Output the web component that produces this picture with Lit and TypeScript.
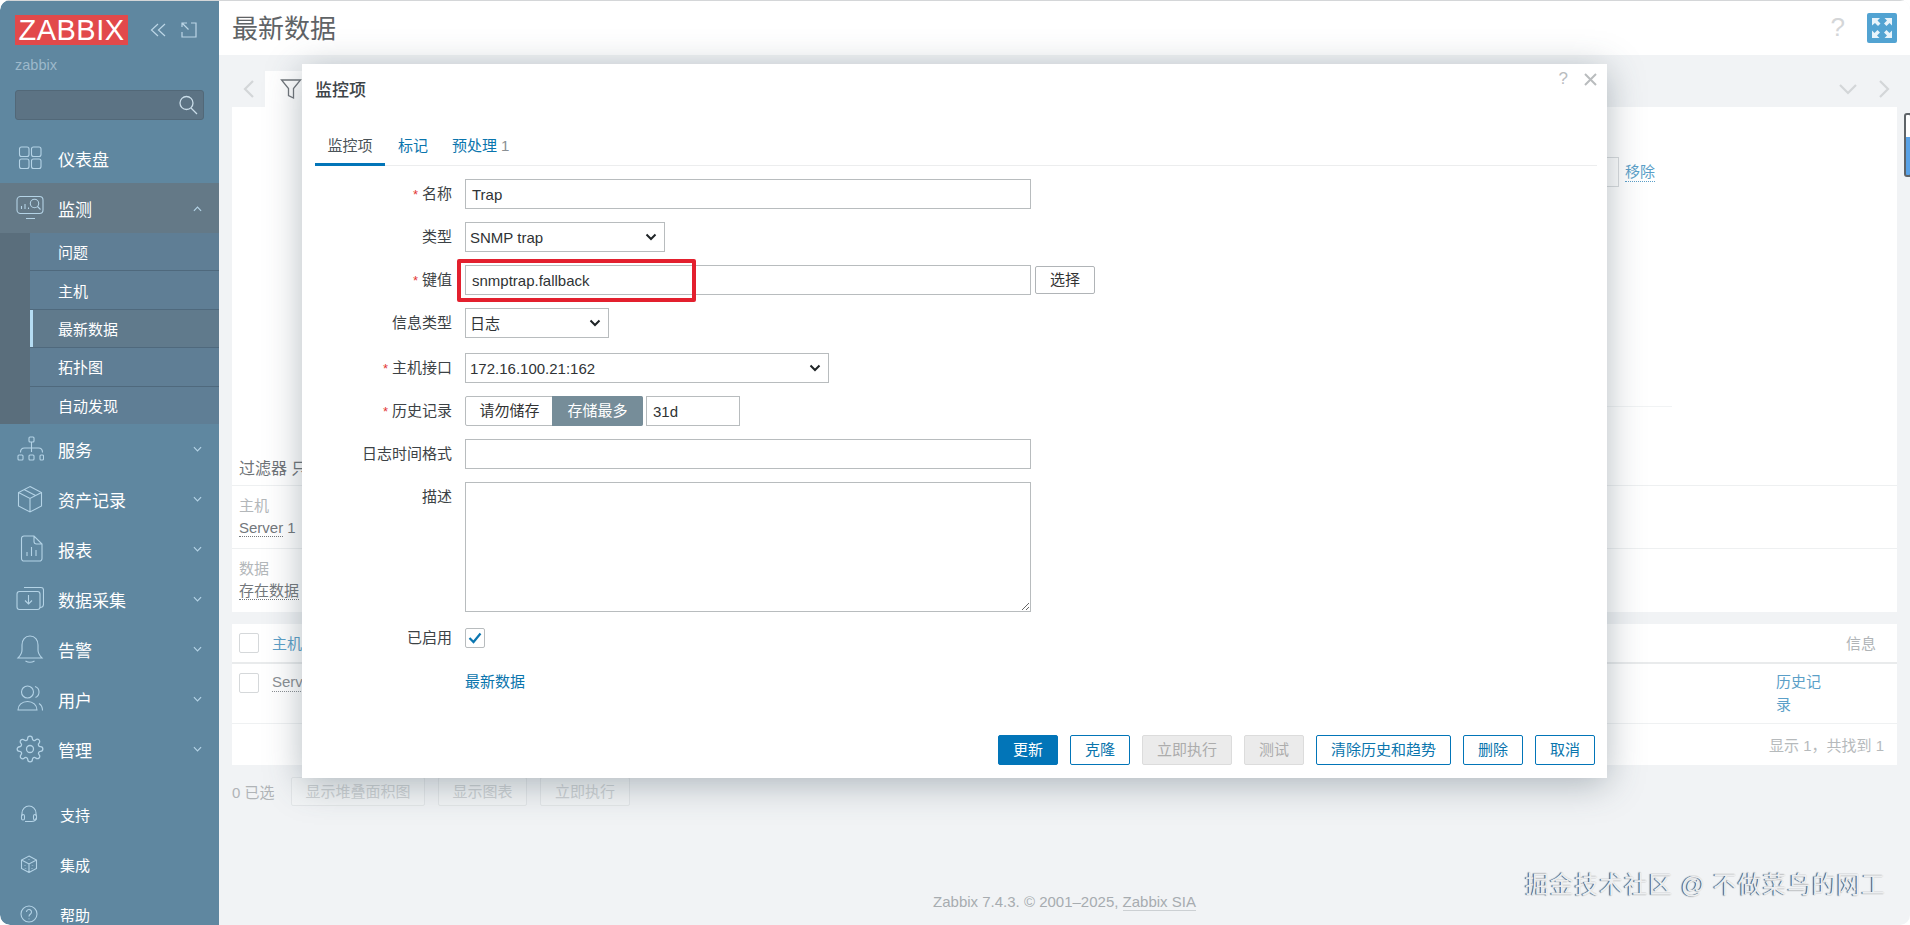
import { LitElement, html, css, svg } from "lit";
import { customElement } from "lit/decorators.js";

const gear = svg`<svg viewBox="0 0 24 24"><circle cx="12" cy="12" r="3"/><path d="M19.4 15a1.65 1.65 0 0 0 .33 1.82l.06.06a2 2 0 0 1 0 2.83 2 2 0 0 1-2.83 0l-.06-.06a1.65 1.65 0 0 0-1.82-.33 1.65 1.65 0 0 0-1 1.51V21a2 2 0 0 1-2 2 2 2 0 0 1-2-2v-.09A1.65 1.65 0 0 0 9 19.4a1.65 1.65 0 0 0-1.82.33l-.06.06a2 2 0 0 1-2.83 0 2 2 0 0 1 0-2.83l.06-.06a1.65 1.65 0 0 0 .33-1.82 1.65 1.65 0 0 0-1.51-1H3a2 2 0 0 1-2-2 2 2 0 0 1 2-2h.09A1.65 1.65 0 0 0 4.6 9a1.65 1.65 0 0 0-.33-1.82l-.06-.06a2 2 0 0 1 0-2.83 2 2 0 0 1 2.83 0l.06.06a1.65 1.65 0 0 0 1.82.33H9a1.65 1.65 0 0 0 1-1.51V3a2 2 0 0 1 2-2 2 2 0 0 1 2 2v.09a1.65 1.65 0 0 0 1 1.51 1.65 1.65 0 0 0 1.82-.33l.06-.06a2 2 0 0 1 2.83 0 2 2 0 0 1 0 2.83l-.06.06a1.65 1.65 0 0 0-.33 1.82V9a1.65 1.65 0 0 0 1.51 1H21a2 2 0 0 1 2 2 2 2 0 0 1-2 2h-.09a1.65 1.65 0 0 0-1.51 1z"/></svg>`;

const icons: Record<string, unknown> = {
  dash: svg`<svg viewBox="0 0 28 28"><rect x="3.5" y="3" width="9.5" height="9.5" rx="2"/><rect x="15.5" y="3" width="9.5" height="9.5" rx="2"/><rect x="3.5" y="15" width="9.5" height="9.5" rx="2"/><rect x="15.5" y="15" width="9.5" height="9.5" rx="2"/></svg>`,
  mon: svg`<svg viewBox="0 0 28 28"><rect x="1" y="2.5" width="26" height="17" rx="3.5"/><path d="M5.5 15v-3M9 15v-5M12.5 15v-1.500M10 24.500h9"/><circle cx="18.500" cy="9.500" r="4.200"/><path d="M21.500 12.500l3 3"/></svg>`,
  svc: svg`<svg viewBox="0 0 28 28"><rect x="13" y="2" width="5" height="5" rx="1"/><rect x="2" y="20" width="5" height="5" rx="1"/><rect x="13" y="20" width="5" height="5" rx="1"/><rect x="24" y="20" width="3.500" height="5" rx="1"/><path d="M15.500 7v10M4.500 17.500c0-3 2-4.500 4-4.500h14c2 0 4 1.500 4 4.500"/></svg>`,
  inv: svg`<svg viewBox="0 0 28 28"><path d="M14 1.500l11.500 6v13.500l-11.500 6-11.500-6v-13.500zM2.500 7.500l11.500 6 11.500-6M14 13.500v13.500M8 4.500l11.500 6"/></svg>`,
  rep: svg`<svg viewBox="0 0 28 28"><path d="M8 1h10l8 8v14.500a2.500 2.500 0 0 1-2.500 2.500h-15.500a2.500 2.500 0 0 1-2.500-2.500v-20a2.500 2.500 0 0 1 2.500-2.500zM18 1v5.500a2.500 2.500 0 0 0 2.500 2.500h5.500M11 21v-4M15.500 21v-9M20 21v-6"/></svg>`,
  data: svg`<svg viewBox="0 0 28 28"><rect x="1" y="6.500" width="23" height="18" rx="2.500"/><path d="M8 2.500h17a2.500 2.500 0 0 1 2.500 2.500v14c0 2-1 3.500-3.500 3.500M12.500 10v9M9 15.500l3.500 3.500 3.500-3.500"/></svg>`,
  bell: svg`<svg viewBox="0 0 28 28"><path d="M14 1c-5 0-8 4-8 9v5c0 3.500-1.500 5.500-4 8h24c-2.500-2.500-4-4.500-4-8v-5c0-5-3-9-8-9zM9.500 26q4.500 2.500 9 0"/></svg>`,
  user: svg`<svg viewBox="0 0 28 28"><circle cx="11.500" cy="7" r="6"/><path d="M2 25c0-5 4-8.500 9.500-8.500s9.500 3.500 9.500 8.500zM19 1.500c3 1 4 3.500 4 5.500s-1 4.500-3.500 5.500M26.500 25.500c0-3-1-5.500-3.500-7"/></svg>`,
  gear,
  sup: svg`<svg viewBox="0 0 18 18"><path d="M2 11V8a7 7 0 0 1 14 0v3M5 16.500h6.500c2.500 0 4.500-1 4.500-3.500"/><rect x="1.500" y="9.500" width="3" height="5.500" rx="1.500"/><rect x="13.500" y="9.500" width="3" height="5.500" rx="1.500"/></svg>`,
  int: svg`<svg viewBox="0 0 18 18"><path d="M9 1l7.500 4v8.500L9 17.500l-7.500-4V5zM1.500 5L9 9l7.500-4M9 9v8.500"/><path d="M9 4.500v.5M5 10v.5M12.500 10v.5M5.500 13v.5M12 13v.5" stroke-width="1.600"/></svg>`,
  help: svg`<svg viewBox="0 0 18 18"><circle cx="9" cy="9" r="8"/><path d="M6.500 7a2.500 2.500 0 1 1 4 2c-1 .7-1.500 1.200-1.500 2.500M9 13.500v.8"/></svg>`,
};

const chevron = (up = false) => svg`<svg class="chev" viewBox="0 0 10 6"><path d=${up ? "M1 5l4-4 4 4" : "M1 1l4 4 4-4"}/></svg>`;
const selArrow = svg`<svg class="arrow" viewBox="0 0 12 8"><path d="M1.500 1.500L6 6l4.500-4.500"/></svg>`;

const topNav = [
  { label: "服务", icon: "svc" }, { label: "资产记录", icon: "inv" }, { label: "报表", icon: "rep" },
  { label: "数据采集", icon: "data" }, { label: "告警", icon: "bell" }, { label: "用户", icon: "user" }, { label: "管理", icon: "gear" },
];
const subNav = ["问题", "主机", "最新数据", "拓扑图", "自动发现"];
const bottomNav = [{ label: "支持", icon: "sup" }, { label: "集成", icon: "int" }, { label: "帮助", icon: "help" }];

@customElement("app-sidebar")
class AppSidebar extends LitElement {
  static styles = css`
    :host { display: block; width: 219px; height: 925px; flex: none; background: #5f87a0; color: #fff; overflow: hidden; border-radius: 10px 0 0 10px; font-family: "Liberation Sans", "Noto Sans CJK SC", sans-serif; }
    .brand { display: flex; align-items: center; padding: 15px 0 0 15px; height: 30px; }
    .logo { width: 113px; height: 30px; background: #e2494b; font-size: 29px; line-height: 31px; text-align: center; letter-spacing: .5px; }
    .ctl { margin-left: 22px; width: 16px; height: 16px; fill: none; stroke: #bcd6e6; stroke-width: 1.2; }
    .ctl + .ctl { margin-left: 15px; }
    .user { padding: 10px 0 0 15px; font-size: 14.5px; line-height: 20px; color: #9db9cb; }
    .search { margin: 15px 0 13px 15px; width: 189px; height: 30px; box-sizing: border-box; background: #5c7384; border: 1px solid #526878; border-radius: 3px; display: flex; justify-content: flex-end; align-items: center; padding-right: 5px; }
    .search svg { width: 20px; height: 20px; fill: none; stroke: #c9dce8; stroke-width: 1.3; }
    .item { height: 50px; display: flex; align-items: center; font-size: 17px; position: relative; }
    .icon { width: 28px; height: 28px; margin: 0 14px 0 16px; flex: none; }
    .icon svg { display: block; width: 100%; height: 100%; fill: none; stroke: #b4d3e6; stroke-width: 1.1; }
    .chev { position: absolute; left: 193px; top: 22px; width: 9px; height: 6px; fill: none; stroke: #b4d3e6; stroke-width: 1.3; }
    .open { background: #647987; }
    .open svg.chev { top: 23px; }
    .subs { height: 191px; margin-left: 0; border-left: 30px solid #5a6e7c; background: #5f7e95; display: flex; flex-direction: column; }
    .sub { flex: 1; display: flex; align-items: center; padding-left: 28px; font-size: 15px; border-bottom: 1px solid #4f697d; box-sizing: border-box; }
    .sub:last-child { border-bottom: 0; }
    .sub.active { background: #607a8c; box-shadow: inset 3px 0 0 #b5dcf2; }
    .bottom { margin-top: 15px; }
    .bottom .item { font-size: 15px; }
    .bottom .icon { width: 18px; height: 18px; margin: 0 22px 0 20px; }
  `;
  render() {
    return html`
      <div class="brand">
        <div class="logo">ZABBIX</div>
        <svg class="ctl" viewBox="0 0 16 16"><path d="M8 2L1.500 8 8 14M15 2L8.500 8l6.500 6"/></svg>
        <svg class="ctl" viewBox="0 0 16 16"><path d="M1 5V1h5M1 1l6.500 6.500M10 1h5v14H1v-5"/></svg>
      </div>
      <div class="user">zabbix</div>
      <div class="search"><svg viewBox="0 0 20 20"><circle cx="8.500" cy="8" r="6.500"/><path d="M13 13l6 6"/></svg></div>
      <div class="item"><span class="icon">${icons.dash}</span>仪表盘</div>
      <div class="item open"><span class="icon">${icons.mon}</span>监测${chevron(true)}</div>
      <div class="subs">
        ${subNav.map((s) => html`<div class="sub ${s === "最新数据" ? "active" : ""}">${s}</div>`)}
      </div>
      ${topNav.map((n) => html`<div class="item"><span class="icon">${icons[n.icon]}</span>${n.label}${chevron()}</div>`)}
      <div class="bottom">
        ${bottomNav.map((n) => html`<div class="item"><span class="icon">${icons[n.icon]}</span>${n.label}</div>`)}
      </div>
    `;
  }
}

@customElement("app-page")
class AppPage extends LitElement {
  static styles = css`
    :host { display: flex; flex-direction: column; flex: 1; min-width: 0; height: 925px; background: #f1f3f5; font-family: "Liberation Sans", "Noto Sans CJK SC", sans-serif; font-size: 15px; color: #8a8f93; }
    .head { height: 55px; flex: none; background: #fff; display: flex; align-items: center; padding: 0 13px; }
    .head h1 { margin: 0; font-size: 26px; font-weight: 400; color: #5f6366; flex: 1; line-height: 55px; position: relative; top: 2px; }
    .q { font-size: 26px; color: #d4d6d8; margin-right: 22px; }
    .full { width: 30px; height: 30px; margin-top: 1px; background: #52a3d2; border-radius: 2px; display: flex; align-items: center; justify-content: center; }
    .full svg { width: 24px; height: 24px; fill: #e8f4fb; }
    .tabs { height: 52px; flex: none; display: flex; margin: 0 13px; align-items: flex-end; }
    .tabs .left { width: 33px; height: 36px; display: flex; align-items: center; justify-content: center; }
    .nav { fill: none; stroke: #d3d6d8; stroke-width: 2.200; }
    .ftab { width: 37px; height: 36px; background: #fff; display: flex; align-items: center; justify-content: center; box-sizing: border-box; padding-left: 14px; }
    .ftab svg { width: 22px; height: 22px; fill: none; stroke: #70757a; stroke-width: 1.3; }
    .tabs .right { margin-left: auto; display: flex; align-items: center; height: 36px; gap: 21px; padding-right: 7px; }
    .panel { height: 505px; flex: none; margin: 0 13px; background: #fff; display: flex; flex-direction: column; }
    .ptop { height: 379px; flex: none; border-bottom: 1px solid #eef0f1; box-sizing: border-box; padding-top: 50px; position: relative; }
    .rm { display: flex; align-items: center; padding-left: 1300px; height: 30px; }
    .rm i { display: block; width: 87px; height: 30px; border: 1px solid #d9dcde; box-sizing: border-box; margin-right: 6px; }
    .dotted { border-bottom: 1px dotted currentColor; line-height: 18px; }
    .rm a { color: #5b9fc8; }
    .hr { margin: 219px 225px 0 1300px; border-top: 1px solid #f1f3f4; }
    .ftitle { margin: 0; padding: 51px 0 0 7px; line-height: 22px; color: #6f7478; font-size: 16px; }
    .pr { height: 63px; flex: none; padding: 10px 7px 0; box-sizing: border-box; border-bottom: 1px solid #eef0f1; }
    .pr:last-child { border: 0; }
    .pr .k { color: #b3b7ba; line-height: 20px; }
    .pr .v { color: #73787c; line-height: 20px; margin-top: 2px; }
    .table { margin: 12px 13px 0; height: 141px; flex: none; background: #fff; display: flex; flex-direction: column; }
    .tr { display: flex; padding: 0 7px; box-sizing: border-box; }
    .th { align-items: center; border-bottom: 2px solid #e9ebec; height: 40px; }
    .td { height: 60px; padding-top: 9px; border-bottom: 1px solid #eff1f2; }
    .cb { width: 20px; height: 20px; box-sizing: border-box; border: 1px solid #d5d8da; border-radius: 2px; flex: none; margin-right: 13px; }
    .th a { color: #5b9fc8; margin-top: -2px; }
    .info { margin-left: auto; padding-right: 14px; color: #b0b4b7; margin-top: -2px; }
    .hist { margin-left: auto; width: 46px; margin-right: 68px; margin-top: -3px; color: #5b9fc8; line-height: 23px; word-break: break-all; }
    .tf { flex: 1; justify-content: flex-end; align-items: center; padding-right: 13px; color: #b6babc; }
    .acts { display: flex; align-items: center; margin: 12px 13px 0; height: 29px; flex: none; gap: 13px; color: #b0b4b7; }
    .acts .cnt { width: 46px; }
    .acts b { font-weight: 400; height: 29px; line-height: 27px; box-sizing: border-box; border: 1px solid #e3e6e8; border-radius: 2px; text-align: center; color: #cdd1d3; background: #f3f5f6; }
    .foot { margin-top: auto; padding-bottom: 14px; text-align: center; color: #a7acb0; font-size: 15px; line-height: 18px; }
    .foot span { border-bottom: 1px solid #ccd0d3; }
  `;
  render() {
    return html`
      <div class="head">
        <h1>最新数据</h1>
        <span class="q">?</span>
        <div class="full"><svg viewBox="0 0 24 24"><path d="M2 2h8l-2.500 2.500 3 3-2.500 2.500-3-3L2 9.500zM22 2v7.500L19.500 7l-3 3-2.500-2.500 3-3L14.500 2zM2 22v-7.500L4.500 17l3-3 2.500 2.500-3 3L9.500 22zM22 22h-7.500l2.500-2.500-3-3 2.500-2.500 3 3 2.500-2.500z"/></svg></div>
      </div>
      <div class="tabs">
        <div class="left"><svg class="nav" width="12" height="20" viewBox="0 0 12 20"><path d="M10 2L2 10l8 8"/></svg></div>
        <div class="ftab"><svg viewBox="0 0 22 22"><path d="M1.500 2h19l-7 8.500V20l-5-2.500v-7z"/></svg></div>
        <div class="right">
          <svg class="nav" width="18" height="12" viewBox="0 0 18 12"><path d="M1 2l8 8 8-8"/></svg>
          <svg class="nav" width="12" height="20" viewBox="0 0 12 20"><path d="M2 2l8 8-8 8"/></svg>
        </div>
      </div>
      <div class="panel">
        <div class="ptop">
          <div class="rm"><i></i><a class="dotted">移除</a></div>
          <div class="hr"></div>
          <div class="ftitle">过滤器 只</div>
        </div>
        <div class="pr"><div class="k">主机</div><div class="v"><span class="dotted">Server</span> 1</div></div>
        <div class="pr"><div class="k">数据</div><div class="v"><span class="dotted">存在数据</span></div></div>
      </div>
      <div class="table">
        <div class="tr th"><span class="cb"></span><a>主机</a><span class="info">信息</span></div>
        <div class="tr td"><span class="cb"></span><span class="dotted" style="height:18px">Server 1</span><span class="hist">历史记录</span></div>
        <div class="tr tf">显示 1，共找到 1</div>
      </div>
      <div class="acts">
        <span class="cnt">0 已选</span>
        <b style="width:134px">显示堆叠面积图</b><b style="width:89px">显示图表</b><b style="width:90px">立即执行</b>
      </div>
      <div class="foot">Zabbix 7.4.3. © 2001–2025, <span>Zabbix SIA</span></div>
    `;
  }
}

@customElement("item-dialog")
class ItemDialog extends LitElement {
  static styles = css`
    :host { position: absolute; left: 302px; top: 64px; width: 1305px; height: 714px; background: #fff; box-shadow: 0 6px 34px rgba(60, 80, 92, .38); box-sizing: border-box; padding: 0 10px 0 13px; display: flex; flex-direction: column; font-family: "Liberation Sans", "Noto Sans CJK SC", sans-serif; font-size: 15px; color: #333; }
    .top { height: 50px; flex: none; display: flex; align-items: center; justify-content: space-between; }
    .top h2 { margin: 0; font-size: 17px; font-weight: 500; color: #3d4448; position: relative; top: -1px; }
    .tools { display: flex; align-items: center; gap: 16px; position: relative; top: -10px; }
    .tools span { color: #b9bcbe; font-size: 17px; }
    .tools svg { width: 13px; height: 13px; stroke: #b9bcbe; stroke-width: 2; fill: none; }
    .tabs { display: flex; height: 52px; flex: none; border-bottom: 1px solid #ecedee; box-sizing: border-box; align-items: flex-end; }
    .tab { height: 51px; line-height: 64px; box-sizing: border-box; padding: 0 12px; color: #0a75ad; }
    .tab.on { color: #4a5358; border-bottom: 3px solid #0275b8; width: 70px; text-align: center; padding: 0; margin-bottom: -1px; height: 52px; margin-right: 1px; }
    .tab n { color: #8a9094; font-size: 15px; margin-left: 4px; }
    .form { padding-top: 13px; display: flex; flex-direction: column; gap: 13px; }
    .row { display: flex; align-items: flex-start; gap: 13px; min-height: 20px; }
    .lab { width: 137px; flex: none; text-align: right; line-height: 30px; height: 30px; color: #3c4245; }
    .lab em { color: #e33734; font-style: normal; margin-right: 4px; font-size: 13px; }
    .inp { height: 30px; box-sizing: border-box; border: 1px solid #b8bcbe; background: #fff; padding: 0 6px; line-height: 29px; color: #2f3335; display: flex; align-items: center; justify-content: space-between; }
    .inp.sel { padding: 0 7px 0 4px; }
    .w566 { width: 566px; }
    .arrow { width: 12px; height: 8px; fill: none; stroke: #1f2427; stroke-width: 2; flex: none; }
    .btn { height: 28px; box-sizing: border-box; border: 1px solid #b0b4b7; border-radius: 2px; line-height: 26px; width: 60px; text-align: center; margin: 1px 0 0 -9px; color: #333; }
    .seg { display: flex; height: 30px; width: 178px; border: 1px solid #b8bcbe; border-radius: 2px; box-sizing: border-box; margin-right: -10px; }
    .seg span { line-height: 28px; text-align: center; }
    .seg span:first-child { width: 87px; }
    .seg .on { flex: 1; background: #768d99; color: #fff; margin: -1px; border-radius: 0 2px 2px 0; line-height: 30px; }
    textarea { width: 566px; height: 130px; box-sizing: border-box; border: 1px solid #b8bcbe; display: block; margin: 0; padding: 6px; background: #fff; border-radius: 0; outline: none; }
    .chk { width: 20px; height: 20px; box-sizing: border-box; border: 1px solid #b8bcbe; border-radius: 2px; display: flex; align-items: center; justify-content: center; }
    .chk svg { width: 14px; height: 12px; fill: none; stroke: #0b76b0; stroke-width: 2.200; }
    .lab.short { height: 20px; line-height: 20px; }
    .ck { margin-top: 3px; }
    .lnk { margin-top: 6px; color: #0a75ad; margin-left: 150px; line-height: 30px; }
    .mark { position: absolute; left: 155px; top: 195px; width: 239px; height: 43px; box-sizing: border-box; border: 4px solid #e3202e; border-radius: 2px; }
    .acts { margin-top: auto; padding: 0 2px 13px 0; display: flex; justify-content: flex-end; gap: 12px; }
    .b { height: 30px; line-height: 28px; box-sizing: border-box; border: 1px solid #0275b8; border-radius: 2px; text-align: center; color: #0a75ad; width: 60px; background: #fff; flex: none; }
    .b.pri { background: #0275b8; color: #fff; }
    .b.off { background: #ebebeb; border-color: #dcdcdc; color: #acacac; }
  `;
  render() {
    const lab = (t: string, req = false) => html`<div class="lab">${req ? html`<em>*</em>` : ""}${t}</div>`;
    return html`
      <div class="top">
        <h2>监控项</h2>
        <div class="tools"><span>?</span><svg viewBox="0 0 13 13"><path d="M1 1l11 11M12 1L1 12"/></svg></div>
      </div>
      <div class="tabs">
        <div class="tab on">监控项</div><div class="tab">标记</div><div class="tab">预处理<n>1</n></div>
      </div>
      <div class="form">
        <div class="row">${lab("名称", true)}<div class="inp w566">Trap</div></div>
        <div class="row">${lab("类型")}<div class="inp sel" style="width:200px">SNMP trap${selArrow}</div></div>
        <div class="row">${lab("键值", true)}<div class="inp w566">snmptrap.fallback</div><div class="btn">选择</div></div>
        <div class="row">${lab("信息类型")}<div class="inp sel" style="width:144px">日志${selArrow}</div></div>
        <div class="row" style="margin-top:2px">${lab("主机接口", true)}<div class="inp sel" style="width:364px">172.16.100.21:162${selArrow}</div></div>
        <div class="row">${lab("历史记录", true)}<div class="seg"><span>请勿储存</span><span class="on">存储最多</span></div><div class="inp" style="width:94px">31d</div></div>
        <div class="row">${lab("日志时间格式")}<div class="inp w566"></div></div>
        <div class="row">${lab("描述")}<textarea aria-label="描述"></textarea></div>
        <div class="row ck"><div class="lab short">已启用</div><div class="chk"><svg viewBox="0 0 14 12"><path d="M1.500 6l4 4 7-8.500"/></svg></div></div>
        <div class="lnk">最新数据</div>
      </div>
      <div class="mark"></div>
      <div class="acts">
        <div class="b pri">更新</div><div class="b">克隆</div><div class="b off" style="width:90px">立即执行</div><div class="b off">测试</div><div class="b" style="width:135px">清除历史和趋势</div><div class="b">删除</div><div class="b">取消</div>
      </div>
    `;
  }
}

@customElement("app-root")
class AppRoot extends LitElement {
  static styles = css`
    :host { display: block; width: 1910px; height: 925px; background: #fff; }
    .shell { position: relative; display: flex; width: 1910px; height: 925px; overflow: hidden; border-radius: 10px; }
    .shell::after { content: ""; position: absolute; left: 0; right: 0; top: 0; height: 1px; background: #d4d6d8; }
    .thumb { position: absolute; left: 1904px; top: 113px; width: 8px; height: 64px; box-sizing: border-box; border: 2px solid #5f6468; border-radius: 3px; background: linear-gradient(#fff 0 36%, #5aa2e6 36%); }
    .mark { position: absolute; right: 24px; bottom: 26px; font-family: "Liberation Sans", "Noto Sans CJK SC", sans-serif; font-size: 24px; letter-spacing: .7px; line-height: 28px; color: #eceef0; text-shadow: -1px -.5px 1px #3e4246; white-space: nowrap; }
  `;
  render() {
    return html`
      <div class="shell">
        <app-sidebar></app-sidebar>
        <app-page></app-page>
        <item-dialog></item-dialog>
        <div class="thumb"></div>
        <div class="mark">掘金技术社区 @ 不做菜鸟的网工</div>
      </div>
    `;
  }
}
